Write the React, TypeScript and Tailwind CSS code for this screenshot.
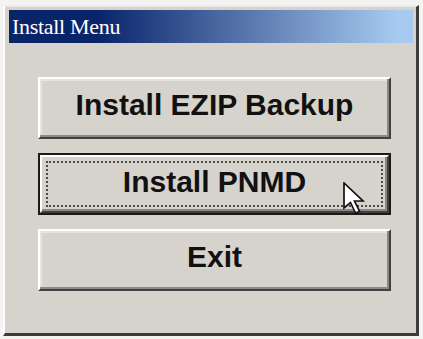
import React from "react";

type MenuButtonProps = {
  label: string;
  focused?: boolean;
};

const MenuButton: React.FC<MenuButtonProps> = ({ label, focused }) => {
  if (focused) {
    return (
      <div className="w-[353px] h-[62px] border-2 border-[#1a1a1a]">
        <div className="h-full border-2 border-t-white border-l-white border-r-[#404040] border-b-[#404040] shadow-[inset_-2px_-2px_0_#8a8884] p-[4px]">
          <div className="h-full border-2 border-dotted border-[#4a4a4a] flex items-center justify-center">
            <span className="text-[30px] font-bold leading-none text-[#111] pb-[4px]">{label}</span>
          </div>
        </div>
      </div>
    );
  }
  return (
    <div className="w-[353px] h-[62px] border-2 border-t-white border-l-white border-r-[#404040] border-b-[#404040] shadow-[inset_-2px_-2px_0_#8a8884,inset_2px_2px_0_#e6e4df] flex items-center justify-center">
      <span className="text-[30px] font-bold leading-none text-[#111] pb-[6px]">{label}</span>
    </div>
  );
};

const Cursor: React.FC = () => (
  <svg
    className="absolute left-[343px] top-[182px]"
    width="26"
    height="34"
    viewBox="0 0 26 34"
  >
    <path
      d="M1 1 L1 26 L7.5 20.5 L12.5 31 L16.5 29.2 L11.5 19 L20 19 Z"
      fill="#ffffff"
      stroke="#111111"
      strokeWidth="1.7"
      strokeLinejoin="miter"
    />
  </svg>
);

export default function App() {
  return (
    <div
      className="relative w-[423px] h-[339px] bg-[#f4f4f2] pt-[5px] pl-[3px]"
      style={{ fontFamily: '"Liberation Sans", Arial, sans-serif' }}
    >
      <div className="w-[416px] h-[331px] bg-[#d6d3cc] border-t-2 border-l-2 border-t-[#ecebe7] border-l-white border-r-[3px] border-b-[3px] border-r-[#3c3c3c] border-b-[#3c3c3c] pt-[3px] pl-[4px] pr-[3px] flex flex-col">
        {/* Title bar */}
        <div className="h-[33px] bg-[linear-gradient(to_right,#0a246a_22%,#a6caf0_96%)] flex items-center pl-[3px]">
          <span
            className="text-white text-[22px] leading-none tracking-[-0.3px]"
            style={{ fontFamily: '"Liberation Serif", "Times New Roman", serif' }}
          >
            Install Menu
          </span>
        </div>

        {/* Buttons */}
        <div className="flex flex-col gap-[14px] pl-[29px] pt-[34px]">
          <MenuButton label="Install EZIP Backup" />
          <MenuButton label="Install PNMD" focused />
          <MenuButton label="Exit" />
        </div>
      </div>
      <Cursor />
    </div>
  );
}
